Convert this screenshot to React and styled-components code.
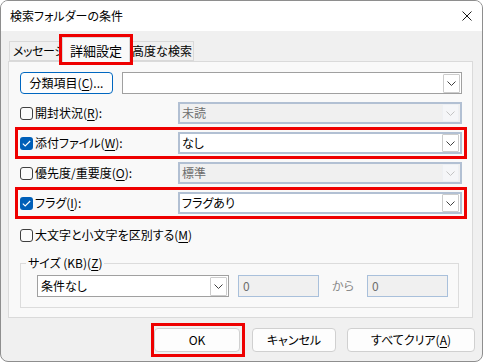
import React from "react";
import styled, { createGlobalStyle } from "styled-components";

const GlobalStyle = createGlobalStyle`
  html, body {
    margin: 0;
    padding: 0;
    background: #ffffff;
  }
  body {
    font-family: "Noto Sans CJK JP", "Noto Sans", sans-serif;
    font-size: 12px;
    font-feature-settings: "palt";
    color: #000;
  }
  * { box-sizing: border-box; }
`;

const Window = styled.div`
  width: 483px;
  height: 362px;
  border: 1px solid #8e8e8e;
  border-radius: 8px;
  overflow: hidden;
  display: flex;
  flex-direction: column;
  background: #f0f0f0;
`;

const TitleBar = styled.div`
  height: 30px;
  flex: none;
  background: #ffffff;
  display: flex;
  align-items: center;
  justify-content: space-between;
  padding: 0 10px 0 9px;
`;

const Title = styled.span`
  font-size: 12px;
  line-height: 14px;
`;

const Body = styled.div`
  flex: 1;
  padding: 4px 8px 0 7px;
  display: flex;
  flex-direction: column;
`;

const TabStrip = styled.div`
  height: 26px;
  display: flex;
  align-items: flex-end;
  padding-left: 1px;
`;

const Tab = styled.div`
  width: ${(p) => p.$w}px;
  height: ${(p) => (p.$active ? 25 : 20)}px;
  margin-bottom: ${(p) => (p.$active ? -1 : 0)}px;
  position: relative;
  z-index: ${(p) => (p.$active ? 2 : 1)};
  display: flex;
  align-items: center;
  justify-content: ${(p) => (p.$left ? "flex-start" : "center")};
  padding-left: ${(p) => (p.$left ? 3 : 0)}px;
  letter-spacing: ${(p) => (p.$left ? "-0.4px" : "0")};
  background: ${(p) => (p.$active ? "#f9f9f9" : "#f0f0f0")};
  border: 1px solid #d9d9d9;
  border-bottom: ${(p) => (p.$active ? "none" : "1px solid #d9d9d9")};
  font-size: ${(p) => (p.$active ? 13 : 12)}px;
  line-height: 14px;
  white-space: nowrap;
  outline: ${(p) => (p.$mark ? "3px solid #ee0000" : "none")};
  outline-offset: 0;
  padding-top: ${(p) => (p.$active ? 1 : 0)}px;
`;

const Panel = styled.div`
  height: 257px;
  margin-right: 1px;
  border: 1px solid #dadada;
  background: #f9f9f9;
  padding: 10px 10px 0 11px;
  display: flex;
  flex-direction: column;
  gap: 8px;
`;

const Row = styled.div`
  height: 22px;
  display: flex;
  align-items: center;
  margin-top: ${(p) => p.$mt || 0}px;
  outline: ${(p) => (p.$mark ? "3px solid #ee0000" : "none")};
  outline-offset: 2px;
`;

const CheckLabel = styled.label`
  width: ${(p) => (p.$w ? `${p.$w}px` : "auto")};
  flex: none;
  display: flex;
  align-items: center;
  gap: 2px;
  line-height: 14px;
  white-space: nowrap;
`;

const Box = styled.span`
  width: 13px;
  height: 13px;
  flex: none;
  border-radius: 3px;
  border: ${(p) => (p.$on ? "none" : "1px solid #404040")};
  background: ${(p) => (p.$on ? "#005fb8" : "#fbfbfb")};
  display: flex;
  align-items: center;
  justify-content: center;
`;

const Key = styled.span`
  text-decoration: underline;
  text-underline-offset: 2px;
`;

const CategoryButton = styled.button`
  width: 93px;
  height: 22px;
  flex: none;
  border: 1px solid #0067c0;
  border-radius: 4px;
  background: #fdfdfd;
  font: inherit;
  font-size: 12px;
  line-height: 14px;
  padding: 0;
  color: #000;
  margin-right: 9px;
`;

const Combo = styled.div`
  flex: ${(p) => (p.$w ? "none" : "1")};
  width: ${(p) => (p.$w ? `${p.$w}px` : "auto")};
  height: 22px;
  display: flex;
  align-items: center;
  border: ${(p) => (p.$thick ? "2px solid #b2c0d3" : "1px solid #a0a0a0")};
  background: ${(p) => (p.$disabled ? "#f0f0f0" : "#ffffff")};
  color: ${(p) => (p.$disabled ? "#6d6d6d" : "#000")};
  padding: 0 1px 0 ${(p) => (p.$thick ? 2 : 3)}px;
  line-height: 14px;
`;

const ComboText = styled.span`
  flex: 1;
  white-space: nowrap;
`;

const DropButton = styled.span`
  width: 17px;
  height: ${(p) => (p.$thick ? 18 : 19)}px;
  flex: none;
  display: flex;
  align-items: center;
  justify-content: center;
  border: 1px solid ${(p) => (p.$disabled ? "#eef0f3" : "#cccccc")};
  background: ${(p) => (p.$disabled ? "#f5f6f8" : "#ffffff")};
  border-radius: 1px;
`;

const Group = styled.fieldset`
  margin: 2px 8px 0 0;
  padding: 5px 10px 10px 16px;
  border: 1px solid #dcdcdc;
  display: flex;
  align-items: center;
`;

const Legend = styled.legend`
  padding: 0 2px;
  margin-left: -11px;
  line-height: 14px;
  font-size: 12px;
`;

const GroupInner = styled.div`
  display: flex;
  align-items: center;
`;

const TextBox = styled.div`
  width: 81px;
  height: 22px;
  flex: none;
  margin-left: ${(p) => p.$ml || 0}px;
  border: 1px solid #a9c0db;
  background: #f0f0f0;
  color: #6d6d6d;
  padding-left: 4px;
  display: flex;
  align-items: center;
  line-height: 14px;
`;

const From = styled.span`
  width: 48px;
  text-align: center;
  color: #8a8a8a;
  line-height: 14px;
`;

const ButtonRow = styled.div`
  display: flex;
  justify-content: flex-end;
  align-items: center;
  gap: 10px;
  padding-top: 8px;
  margin-right: -1px;
`;

const Marked = styled.span`
  display: flex;
  padding: 2px 2px 2px 0;
  margin-right: -2px;
  outline: 3px solid #ee0000;
`;

const DialogButton = styled.button`
  width: ${(p) => p.$w}px;
  height: 24px;
  margin-left: ${(p) => p.$ml || 0}px;
  border: 1px solid #d0d0d0;
  border-radius: 4px;
  background: #fdfdfd;
  font: inherit;
  font-size: 12px;
  line-height: 14px;
  color: #000;
  padding: 0;
`;

const Chevron = ({ light }) => (
  <svg width="9" height="5" viewBox="0 0 9 5">
    <polyline
      points="0.5,0.5 4.5,4.5 8.5,0.5"
      fill="none"
      stroke={light ? "#c4c4c4" : "#404040"}
      strokeWidth="1"
    />
  </svg>
);

const Check = () => (
  <svg width="9" height="7" viewBox="0 0 9 7">
    <polyline points="0.8,3.6 3.2,6 8.2,1" fill="none" stroke="#ffffff" strokeWidth="1.1" />
  </svg>
);

const CloseIcon = () => (
  <svg width="10" height="10" viewBox="0 0 10 10">
    <path d="M0.5 0.5 L9.5 9.5 M9.5 0.5 L0.5 9.5" stroke="#1a1a1a" strokeWidth="1" />
  </svg>
);

const CheckBox = ({ on, children, w }) => (
  <CheckLabel $w={w}>
    <Box $on={on}>{on && <Check />}</Box>
    <span>{children}</span>
  </CheckLabel>
);

const ComboBox = ({ value, disabled, thick, w }) => (
  <Combo $disabled={disabled} $thick={thick} $w={w}>
    <ComboText>{value}</ComboText>
    <DropButton $disabled={disabled} $thick={thick}>
      <Chevron light={disabled} />
    </DropButton>
  </Combo>
);

const rows = [
  { label: "開封状況", key: "R", value: "未読", on: false, disabled: true },
  { label: "添付ファイル", key: "W", value: "なし", on: true, disabled: false },
  { label: "優先度/重要度", key: "O", value: "標準", on: false, disabled: true },
  { label: "フラグ", key: "I", value: "フラグあり", on: true, disabled: false },
];

export default function App() {
  return (
    <>
      <GlobalStyle />
      <Window>
        <TitleBar>
          <Title>検索フォルダーの条件</Title>
          <CloseIcon />
        </TitleBar>
        <Body>
          <TabStrip>
            <Tab $w={53} $left>
              メッセージ
            </Tab>
            <Tab $w={68} $active $mark>
              詳細設定
            </Tab>
            <Tab $w={64}>高度な検索</Tab>
          </TabStrip>
          <Panel>
            <Row>
              <CategoryButton>
                分類項目(<Key>C</Key>)...
              </CategoryButton>
              <ComboBox value="" />
            </Row>
            {rows.map((r) => (
              <Row key={r.key} $mark={r.on}>
                <CheckBox on={r.on} w={158}>
                  {r.label}(<Key>{r.key}</Key>):
                </CheckBox>
                <ComboBox value={r.value} disabled={r.disabled} thick />
              </Row>
            ))}
            <Row $mt={2}>
              <CheckBox>
                大文字と小文字を区別する(<Key>M</Key>)
              </CheckBox>
            </Row>
            <Group>
              <Legend>
                サイズ (KB)(<Key>Z</Key>)
              </Legend>
              <GroupInner>
                <ComboBox value="条件なし" w={192} />
                <TextBox $ml={9}>0</TextBox>
                <From>から</From>
                <TextBox>0</TextBox>
              </GroupInner>
            </Group>
          </Panel>
          <ButtonRow>
            <Marked>
              <DialogButton $w={86}>OK</DialogButton>
            </Marked>
            <DialogButton $w={84} $ml={2}>
              キャンセル
            </DialogButton>
            <DialogButton $w={128} $ml={1}>
              すべてクリア(<Key>A</Key>)
            </DialogButton>
          </ButtonRow>
        </Body>
      </Window>
    </>
  );
}
